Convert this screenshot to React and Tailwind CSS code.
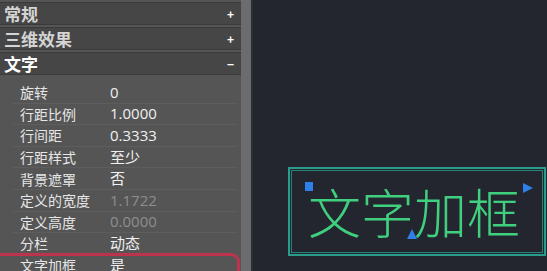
import React from 'react';

const HEADERS = [
  { title: '常规', sign: '+', open: false },
  { title: '三维效果', sign: '+', open: false },
  { title: '文字', sign: '−', open: true },
];

const ROWS = [
  { label: '旋转', value: '0' },
  { label: '行距比例', value: '1.0000' },
  { label: '行间距', value: '0.3333' },
  { label: '行距样式', value: '至少' },
  { label: '背景遮罩', value: '否' },
  { label: '定义的宽度', value: '1.1722', dim: true },
  { label: '定义高度', value: '0.0000', dim: true },
  { label: '分栏', value: '动态' },
  { label: '文字加框', value: '是', marked: true },
];

const font = { fontFamily: '"Noto Sans CJK SC", "Liberation Sans", sans-serif' };

export default function App() {
  return (
    <div className="flex w-[547px] h-[271px] overflow-hidden bg-[#23262e]" style={font}>
      {/* Properties panel */}
      <div className="w-[241px] h-full flex flex-col overflow-hidden bg-[#555555] pt-[2px]">
        {HEADERS.map(h => (
          <div
            key={h.title}
            className="shrink-0 h-[23px] mb-[2px] flex items-center justify-between pl-[4px] pr-[7px] bg-[#464646] border-y border-[#3a3a3a]"
          >
            <span className={`text-[17px] font-bold leading-none ${h.open ? 'text-white' : 'text-[#d4d4d4]'}`}>
              {h.title}
            </span>
            <span className="text-[12px] font-bold text-white leading-none">{h.sign}</span>
          </div>
        ))}

        {/* Rows */}
        <div className="relative shrink-0 flex flex-col pt-[5px] pl-[12px] pr-[4px]">
          {ROWS.map(r => (
            <div key={r.label} className="shrink-0 h-[21.6px] flex items-center border-b border-[#5d5d5d]">
              <span className="w-[98px] pl-[8px] text-[14px] leading-none text-[#e6e6e6]">{r.label}</span>
              <span
                className={`text-[15px] leading-none ${r.dim ? 'text-[#8e8e8e]' : 'text-[#f0f0f0]'}`}
                style={{ fontFamily: '"Open Sans", "Noto Sans CJK SC", sans-serif' }}
              >
                {r.value}
              </span>
            </div>
          ))}
          {/* red highlight around last row */}
          <div className="absolute left-[-7px] right-[1px] top-[176px] h-[40px] rounded-[9px] border-[3px] border-[#c8304a]/90" />
        </div>
      </div>

      {/* scroll strip */}
      <div className="w-[10px] h-full bg-[#6c6c6e]" />
      <div className="w-[2px] h-full bg-[#2c2f35]" />

      {/* Drawing canvas */}
      <div className="relative flex-1 h-full">
        <div className="absolute left-[35px] top-[167px] w-[258px] h-[89px] border-2 border-[#2a9c8c] p-[1px]">
          <div className="w-full h-full border border-[#238577] flex items-center justify-center pr-[6px]">
            <span
              className="text-[53px] leading-none text-[#3fcf7e] font-light"
              style={{ fontFamily: '"Noto Sans CJK SC", sans-serif' }}
            >
              文字加框
            </span>
          </div>
          {/* grips */}
          <div className="absolute left-[15px] top-[13px] w-[8px] h-[9px] bg-[#2f7fe9]" />
          <svg className="absolute left-[233px] top-[14px]" width="11" height="11" viewBox="0 0 11 11">
            <polygon points="0,0 10,5 0,10" fill="#2f7fe9" />
          </svg>
          <svg className="absolute left-[117px] top-[60px]" width="11" height="11" viewBox="0 0 11 11">
            <polygon points="5,0 10,10 0,10" fill="#2f7fe9" />
          </svg>
        </div>
      </div>
    </div>
  );
}
